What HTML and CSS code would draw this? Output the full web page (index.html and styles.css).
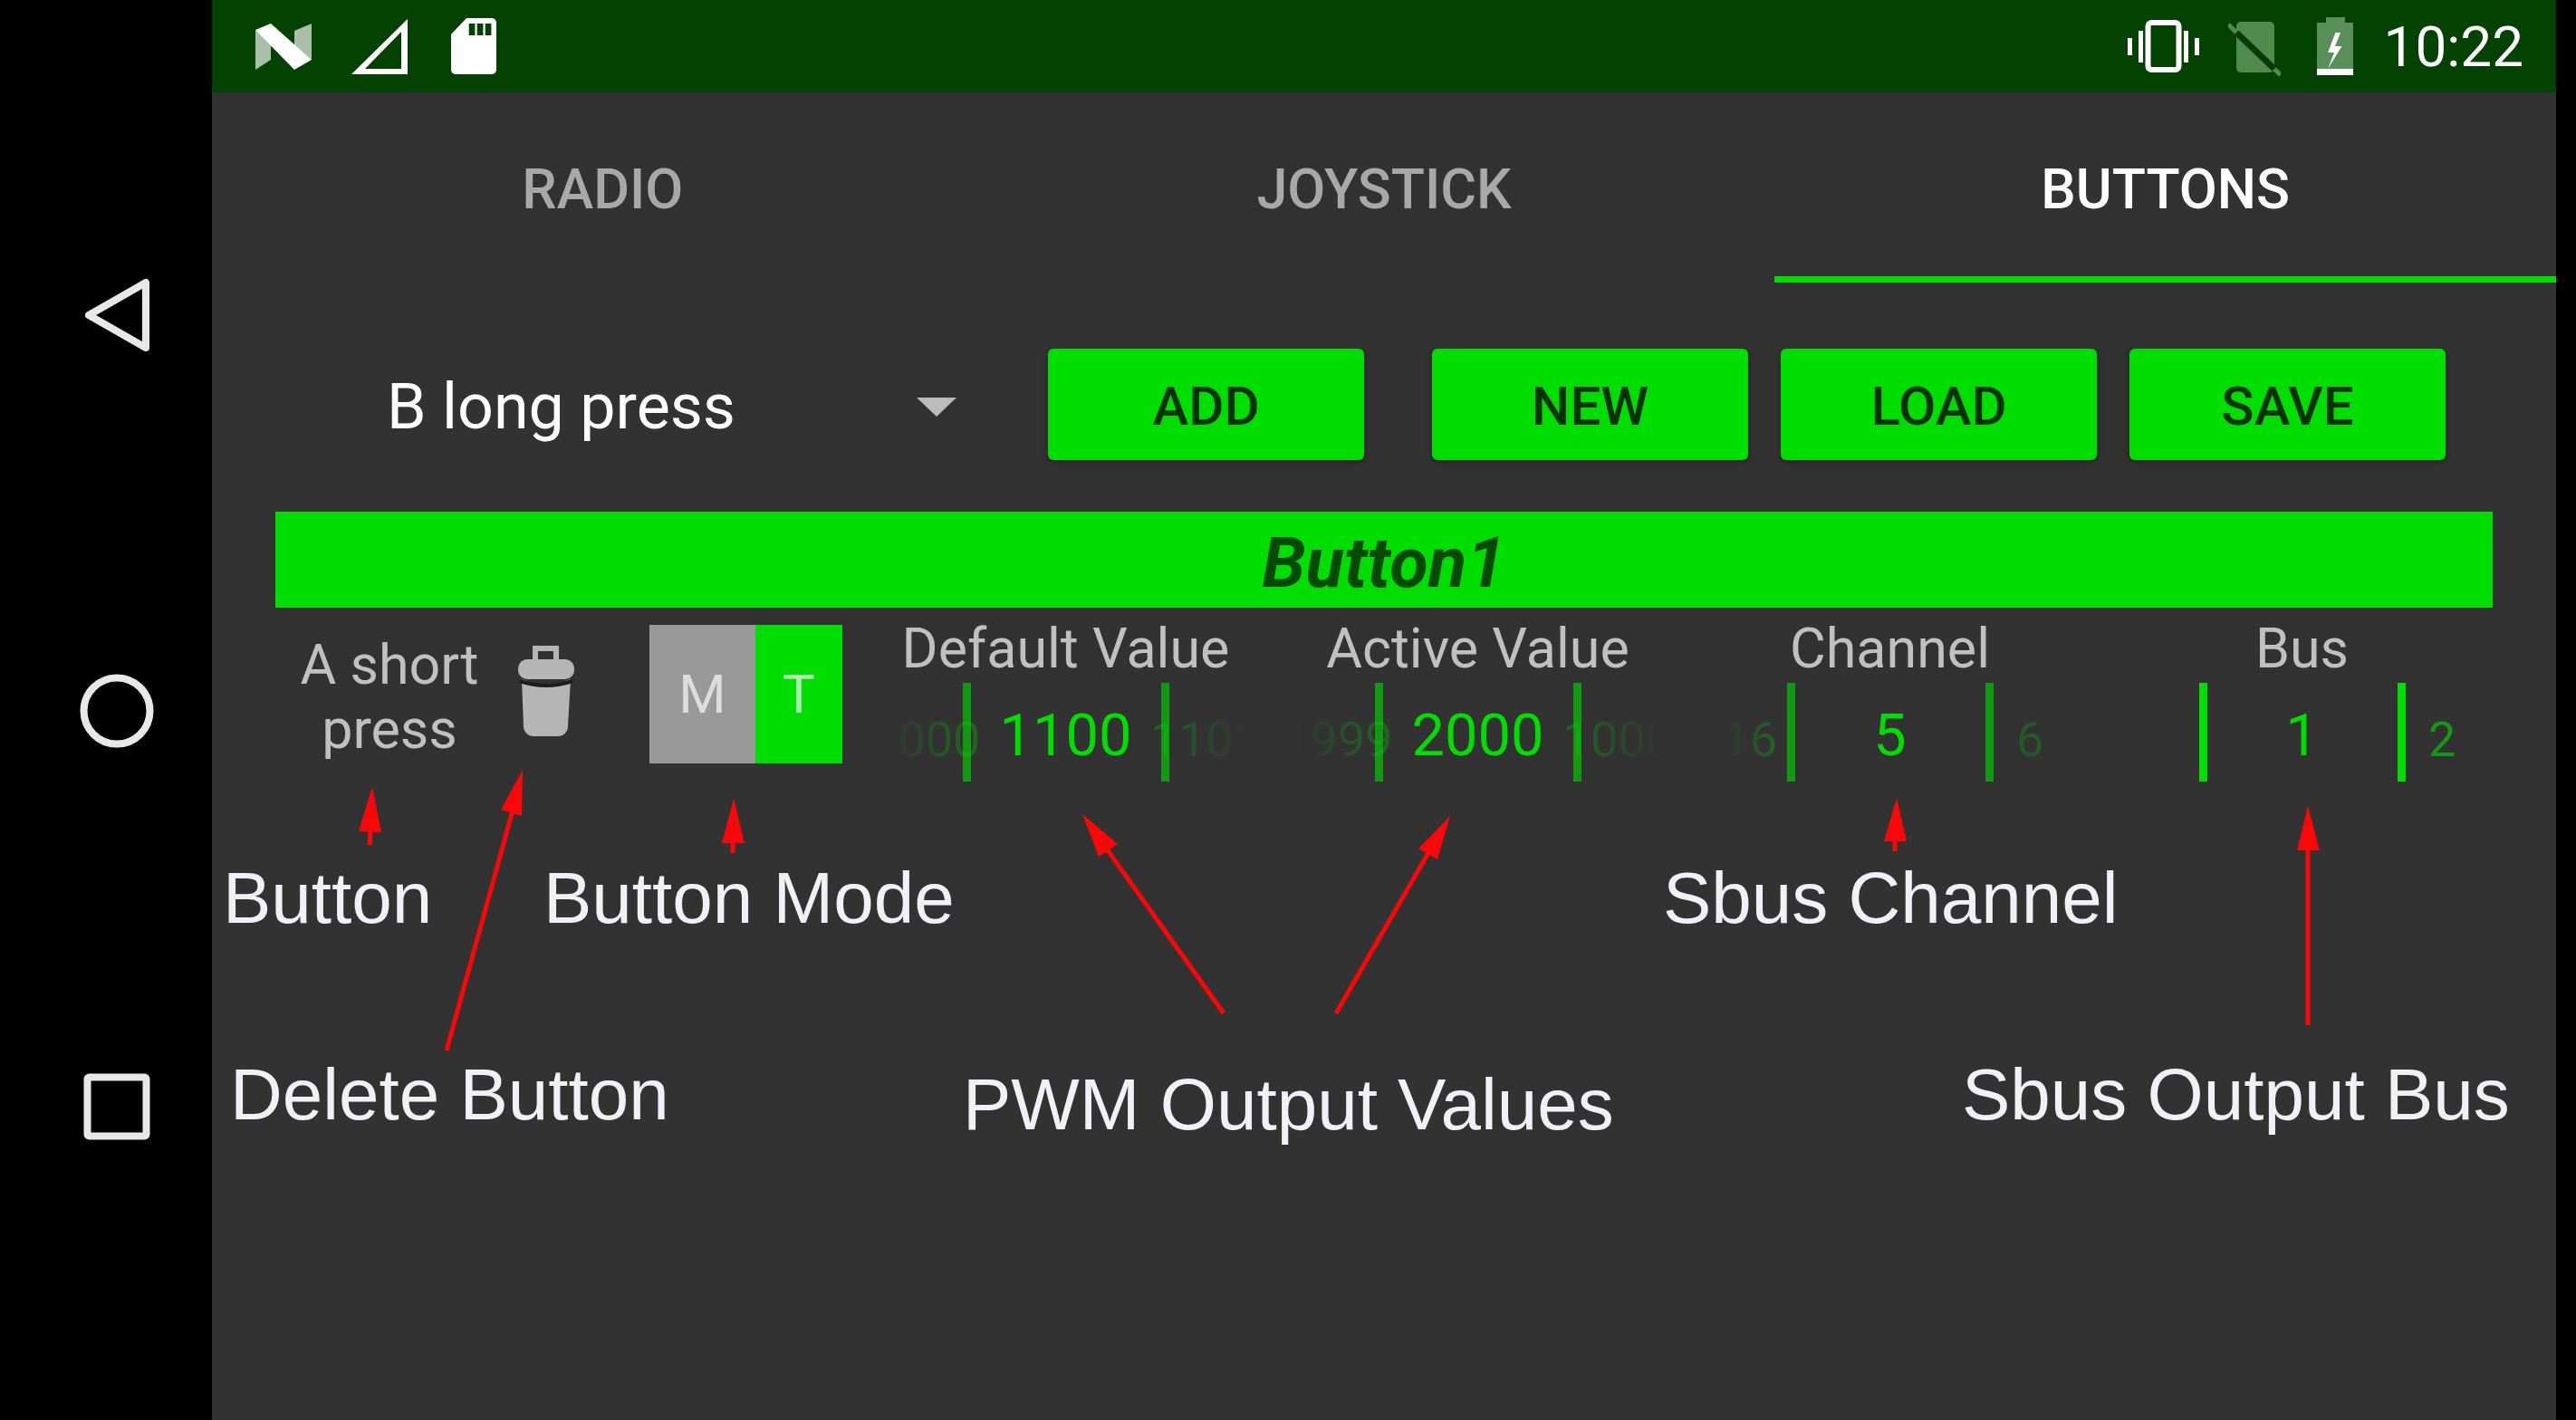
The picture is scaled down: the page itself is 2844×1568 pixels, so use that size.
FILE: index.html

```html
<!DOCTYPE html>
<html lang="en">
<head>
  <meta charset="UTF-8" />
  <title>Buttons</title>
  <link rel="stylesheet" href="styles.css">
</head>
<body>
<div class="screen">

  <nav class="navbar">
    <svg class="nav-icon" viewBox="0 0 90 90"><path d="M14 45 L77 9 V81 Z" /></svg>
    <svg class="nav-icon" viewBox="0 0 90 90"><circle cx="45" cy="45" r="36.5" /></svg>
    <svg class="nav-icon" viewBox="0 0 90 90"><rect x="12.5" y="12.5" width="65" height="65" rx="2" /></svg>
  </nav>

  <main class="app">
    <div class="statusbar">
      <div class="status-left">
        <svg class="icon-n" width="62" height="51" viewBox="0 0 62 51">
          <path fill="#a9bfa9" d="M0 7 L17 22 V40 L0 51 Z" />
          <path fill="#a9bfa9" d="M43 8 L62 0 V40 L43 24 Z" />
          <path fill="#fff" d="M0 7 L17 0 L62 40 L43 51 Z" />
        </svg>
        <svg class="icon-signal" width="62" height="61" viewBox="0 0 62 61">
          <path fill="#fff" fill-rule="evenodd" d="M0 61 L62 0 V61 Z M15 55 H55 V14 Z" />
        </svg>
        <svg class="icon-sd" width="50" height="62" viewBox="0 0 50 62">
          <path fill="#fff" d="M17 0 H45 a5 5 0 0 1 5 5 V57 a5 5 0 0 1 -5 5 H5 a5 5 0 0 1 -5 -5 V18 Z" />
          <rect fill="#034200" x="19.7" y="6" width="6.7" height="13" />
          <rect fill="#034200" x="28.7" y="6" width="6.7" height="13" />
          <rect fill="#034200" x="37.7" y="6" width="6.7" height="13" />
        </svg>
      </div>
      <div class="status-right">
        <svg class="icon-vibrate" width="79" height="58" viewBox="0 0 79 58">
          <rect x="22.5" y="3" width="34" height="52" rx="4" fill="none" stroke="#fff" stroke-width="6" />
          <rect fill="#fff" x="0" y="20" width="5" height="19" />
          <rect fill="#fff" x="12" y="12" width="5" height="35" />
          <rect fill="#fff" x="62" y="12" width="5" height="35" />
          <rect fill="#fff" x="74" y="20" width="5" height="19" />
        </svg>
        <svg class="icon-nosim" width="58" height="62" viewBox="0 0 58 62">
          <path fill="#4f8a4f" d="M14 1 H46 a5 5 0 0 1 5 5 V52 a5 5 0 0 1 -5 5 H14 a5 5 0 0 1 -5 -5 V6 a5 5 0 0 1 5 -5 Z" />
          <path stroke="#4f8a4f" stroke-width="5" d="M0 4 L58 60" />
          <path stroke="#0a3a0a" stroke-width="7" d="M9 13 L51 53" />
        </svg>
        <svg class="icon-battery" width="40" height="65" viewBox="0 0 40 65">
          <rect fill="#5a8f5a" x="10" y="0" width="21" height="7" />
          <rect fill="#5a8f5a" x="0" y="6" width="40" height="51" />
          <rect fill="#fff" x="0" y="57" width="40" height="7" />
          <path fill="#fff" d="M20.5 17 L12 39 H19 L12 57 L27.5 32 H20 L26 17 Z" />
        </svg>
        <span class="clock">10:22</span>
      </div>
    </div>

    <div class="tabs">
      <div class="tab">RADIO</div>
      <div class="tab">JOYSTICK</div>
      <div class="tab active">BUTTONS</div>
    </div>

    <div class="content">
      <div class="toolbar">
        <div class="dropdown">
          <span>B long press</span>
          <i class="caret"></i>
        </div>
        <button class="btn btn-add">ADD</button>
        <button class="btn">NEW</button>
        <button class="btn">LOAD</button>
        <button class="btn">SAVE</button>
      </div>

      <div class="banner">Button1</div>

      <div class="row">
        <div class="press-name">A short press</div>
        <svg class="trash" width="64" height="102" viewBox="0 0 64 102">
          <path fill="none" stroke="#b5b5b5" stroke-width="6" d="M20 18 V4 H43 V18" />
          <rect fill="#b5b5b5" x="1" y="16" width="62" height="22" rx="10" />
          <path fill="#b5b5b5" d="M5 38 Q32 50 59 38 L56 90 a11 11 0 0 1 -11 11 H18 a11 11 0 0 1 -11 -11 Z" />
          <path fill="none" stroke="#1c1c1c" stroke-width="4" d="M3 40 Q32 50 61 40" />
        </svg>
        <div class="toggle">
          <div class="toggle-m">M</div>
          <div class="toggle-t">T</div>
        </div>

        <div class="field">
          <div class="field-label">Default Value</div>
          <div class="picker">
            <div class="ghost ghost-left"><span>1000</span></div>
            <div class="value">1100</div>
            <div class="ghost ghost-right"><span>1101</span></div>
          </div>
        </div>
        <div class="field">
          <div class="field-label">Active Value</div>
          <div class="picker">
            <div class="ghost ghost-left"><span>1999</span></div>
            <div class="value">2000</div>
            <div class="ghost ghost-right"><span>1000</span></div>
          </div>
        </div>
        <div class="field">
          <div class="field-label">Channel</div>
          <div class="picker">
            <div class="ghost ghost-left"><span>16</span></div>
            <div class="value">5</div>
            <div class="ghost ghost-right ghost-single"><span>6</span></div>
          </div>
        </div>
        <div class="field">
          <div class="field-label">Bus</div>
          <div class="picker picker-bus">
            <div class="ghost ghost-left"></div>
            <div class="value">1</div>
            <div class="ghost ghost-right"><span>2</span></div>
          </div>
        </div>
      </div>
    </div>
  </main>

  <!-- red annotations drawn on top of the app -->
  <svg class="arrows" viewBox="0 0 2844 1568">
    <path class="shaft" d="M408 933 L409 915" />
    <path class="head" d="M411 869 L396 918 L421 919 Z" />
    <path class="shaft" d="M493 1160 L566 895" />
    <path class="head" d="M577 850 L553 894 L576 901 Z" />
    <path class="shaft" d="M809 942 V928" />
    <path class="head" d="M810 882 L797 931 H822 Z" />
    <path class="shaft" d="M1351 1119 L1220 935" />
    <path class="head" d="M1195 899 L1213 946 L1234 932 Z" />
    <path class="shaft" d="M1475 1119 L1578 940" />
    <path class="head" d="M1601 901 L1566 937 L1587 949 Z" />
    <path class="shaft" d="M2092 940 V925" />
    <path class="head" d="M2094 881 L2080 929 H2105 Z" />
    <path class="shaft" d="M2548 1132 V935" />
    <path class="head" d="M2548 890 L2536 939 H2561 Z" />
  </svg>
  <div class="note note-button">Button</div>
  <div class="note note-mode">Button Mode</div>
  <div class="note note-delete">Delete Button</div>
  <div class="note note-pwm">PWM Output Values</div>
  <div class="note note-channel">Sbus Channel</div>
  <div class="note note-bus">Sbus Output Bus</div>

</div>
</body>
</html>
```

FILE: styles.css

```css
* {
  box-sizing: border-box;
}
body {
  margin: 0;
  background-color: #000;
  font-family: Roboto, Arial, sans-serif;
}
.screen {
  position: relative;
  display: flex;
  width: 2844px;
  height: 1568px;
  padding-right: 22px;
  overflow: hidden;
  background-color: #000;
}

/* android nav bar */
.navbar {
  flex: 0 0 234px;
  display: flex;
  flex-direction: column;
  align-items: center;
  gap: 347px;
  padding: 303px 0 0 23px;
}
.nav-icon {
  width: 90px;
  height: 90px;
  fill: none;
  stroke: #e8e8e8;
  stroke-width: 8;
  stroke-linejoin: round;
}

.app {
  flex: 1;
  min-width: 0;
  background-color: #323232;
}

/* status bar */
.statusbar {
  display: flex;
  justify-content: space-between;
  align-items: center;
  height: 102px;
  padding: 0 36px 0 48px;
  background-color: #034200;
}
.status-left,
.status-right {
  display: flex;
  align-items: center;
}
.status-left {
  gap: 44px;
}
.status-left svg,
.status-right svg {
  display: block;
}
.icon-sd {
  margin-left: 4px;
}
.icon-nosim {
  margin-left: 32px;
  margin-top: 6px;
}
.icon-battery {
  margin-left: 40px;
}
.clock {
  margin-left: 34px;
  font-size: 62px;
  color: #fff;
}

/* tabs */
.tabs {
  display: grid;
  grid-template-columns: repeat(3, 1fr);
  height: 210px;
}
.tab {
  display: flex;
  align-items: center;
  justify-content: center;
  padding-top: 4px;
  font-size: 61px;
  font-weight: 500;
  color: #a8a8a8;
}
.tab.active {
  color: #fff;
  box-shadow: inset 0 -7px 0 #00dd00;
}

.content {
  padding: 73px 70px 0;
}

/* top row */
.toolbar {
  display: flex;
  align-items: center;
  gap: 36px;
}
.dropdown {
  display: flex;
  justify-content: space-between;
  align-items: center;
  width: 752px;
  margin-right: 65px;
  padding: 5px 0 0 123px;
  font-size: 70px;
  color: #fff;
}
.caret {
  width: 0;
  height: 0;
  border-left: 22px solid transparent;
  border-right: 22px solid transparent;
  border-top: 21px solid #bbb;
}
.btn {
  width: 349px;
  height: 123px;
  padding: 3px 0 0;
  border: none;
  border-radius: 6px;
  background-color: #00dd00;
  box-shadow: 0 2px 6px rgba(0,0,0,0.3);
  font-family: Roboto, Arial, sans-serif;
  font-size: 60px;
  font-weight: 500;
  color: #013301;
}
.btn-add {
  margin-right: 39px;
}

.banner {
  height: 106px;
  margin-top: 57px;
  background-color: #00dd00;
  text-align: center;
  line-height: 114px;
  font-size: 78px;
  font-weight: 700;
  font-style: italic;
  color: #034a03;
}

/* settings row */
.row {
  display: flex;
  align-items: flex-start;
}
.press-name {
  flex: 0 0 252px;
  margin-top: 28px;
  padding: 0 20px;
  text-align: center;
  font-size: 61px;
  line-height: 71px;
  color: #c0c0c0;
}
.trash {
  flex: none;
  margin: 41px 0 0 15px;
}
.toggle {
  flex: none;
  display: flex;
  width: 213px;
  height: 153px;
  margin: 19px 19px 0 82px;
  font-size: 60px;
  line-height: 153px;
  text-align: center;
}
.toggle-m {
  flex: 0 0 117px;
  background-color: #999;
  color: #ddd;
}
.toggle-t {
  flex: 1;
  background-color: #00dd00;
  color: #b4f0b4;
}

.field {
  flex: 0 0 455px;
  min-width: 0;
}
.field-label {
  height: 83px;
  text-align: center;
  font-size: 61px;
  line-height: 91px;
  color: #c0c0c0;
}
.picker {
  display: grid;
  grid-template-columns: minmax(0, 1fr) 228px minmax(0, 1fr);
  grid-template-rows: 109px;
  height: 109px;
}
.value {
  border-left: 9px solid #119911;
  border-right: 9px solid #119911;
  text-align: center;
  font-size: 65px;
  line-height: 117px;
  color: #00dd00;
}
.ghost {
  display: flex;
  justify-content: center;
  font-size: 54px;
  line-height: 125px;
  color: rgba(0,221,0,0.28);
  white-space: nowrap;
}
.ghost span {
  display: block;
  flex: none;
}
.ghost-left {
  padding-left: 32px;
}
.ghost-right {
  padding-right: 32px;
}
.ghost-left span {
  mask-image: linear-gradient(to right, transparent 10%, #000 90%);
}
.ghost-right span {
  mask-image: linear-gradient(to left, transparent 10%, #000 90%);
}
.ghost-single {
  color: rgba(0,221,0,0.22);
}
.ghost-single span {
  mask-image: none;
}
.picker-bus .value {
  border-color: #00dd00;
}
.picker-bus .ghost-right {
  color: rgba(0,221,0,0.6);
}
.picker-bus .ghost-right span {
  mask-image: none;
}

/* annotations */
.arrows {
  position: absolute;
  left: 0;
  top: 0;
  width: 2844px;
  height: 1568px;
}
.arrows .head {
  fill: #f80808;
}
.arrows .shaft {
  fill: none;
  stroke: #f80808;
  stroke-width: 5;
}
.note {
  position: absolute;
  font-family: "Liberation Sans", Arial, sans-serif;
  font-size: 80px;
  line-height: 92px;
  color: #f0f0f5;
  white-space: nowrap;
}
.note-button { left: 246px; top: 946px; }
.note-mode { left: 600px; top: 946px; }
.note-delete { left: 254px; top: 1163px; }
.note-pwm { left: 1063px; top: 1174px; }
.note-channel { left: 1836px; top: 946px; }
.note-bus { left: 2166px; top: 1163px; }
```
